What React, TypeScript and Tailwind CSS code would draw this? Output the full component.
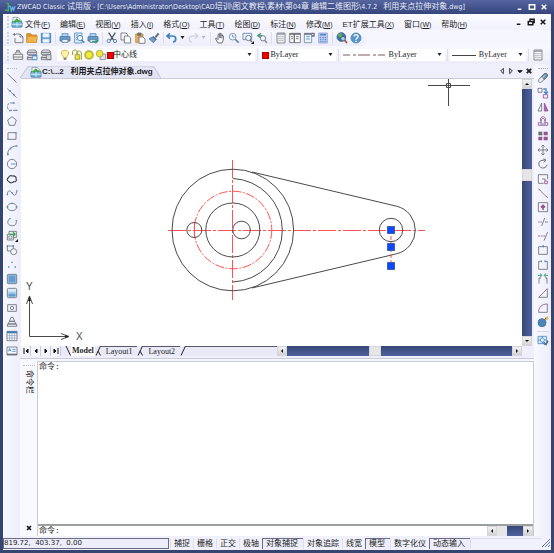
import type { ReactNode } from 'react'
import clsx from 'clsx'

type Tool = { name: string; art: ReactNode }

// all icons are drawn on a 36 unit grid, 3 units to a pixel
function Glyph({ children }: { children: ReactNode }) {
  return (
    <svg
      viewBox="0 0 36 36"
      className="size-3 shrink-0"
      fill="none"
      stroke="#6a6e75"
      strokeWidth="2.5"
      aria-hidden="true"
    >
      {children}
    </svg>
  )
}

const blue = '#4b8ac8'
const purple = '#9a4f9b'

const logo = (
  <>
    <path d="M6 4h15l9 9v20H6z" fill="#f4f8fb" stroke="#8795a5" />
    <path d="M3 17h30v16H3z" fill="#79b9dc" stroke="#4483ab" />
    <path d="M18 17v16M3 25h30" stroke="#d9f0fb" />
    <path d="M9 17l8-9 4 4 7 3-7 2-4-3-3 5z" fill="#3ba939" stroke="#3ba939" />
  </>
)

const page = (
  <>
    <path d="M6 3h24v30H6z" fill="#f1f2f3" stroke="#747a80" />
    <path d="M6 6h24" stroke="#9aa0a6" strokeWidth="5" />
    <path d="M10 14h16M10 20h16M10 26h16" stroke="#9a9fa4" strokeDasharray="4 2" />
  </>
)

const printer = (
  <>
    <path d="M9 5h18v9H9z" fill="#b9d8ee" stroke={blue} />
    <path d="M3 14h30v13H3z" fill="#6ea0cc" stroke="#48759f" />
    <path d="M9 22h18v9H9z" fill="#eef6fc" stroke="#48759f" />
  </>
)

const fileTools: Tool[] = [
  {
    name: 'New',
    art: <path d="M12 6h12l9 9v17H9V18M24 6v9h9M7 3v9M2 7h10" fill="none" />,
  },
  {
    name: 'Open',
    art: (
      <>
        <path d="M2 5h12l4 4h14v22H2z" fill="#d99228" stroke="#c98825" />
        <path d="M5 13h29l-3 18H2z" fill="#f1b54d" stroke="#d99a34" />
      </>
    ),
  },
  {
    name: 'Save',
    art: (
      <>
        <path d="M4 4h28v28H4z" fill="#5f9ed2" stroke="#3f80b9" />
        <path d="M9 5h18v10H9zM9 22h18v9H9z" fill="#f3f8fc" stroke="#d5e6f4" />
      </>
    ),
  },
]

const printTools: Tool[] = [
  { name: 'Print', art: printer },
  {
    name: 'Print preview',
    art: (
      <>
        <path d="M5 3h22v30H5z" fill="#e0effa" stroke={blue} />
        <path d="M9 9h7M9 16h4M9 23h4" stroke={blue} />
        <circle cx="21" cy="18" r="8" fill="#eef8ff" stroke="#477fae" />
        <path d="M26 24l8 8" stroke="#477fae" strokeWidth="4" />
      </>
    ),
  },
  {
    name: 'Publish',
    art: (
      <>
        {printer}
        <path d="M15 28h16m-6-6l7 6-7 6" stroke="#3b9c78" strokeWidth="4" />
      </>
    ),
  },
]

const editTools: Tool[] = [
  {
    name: 'Cut',
    art: (
      <>
        <path d="M8 2l15 23M28 2L13 25" stroke="#454b53" strokeWidth="3.5" />
        <circle cx="8" cy="27" r="5" stroke="#4479ad" />
        <circle cx="27" cy="27" r="5" stroke="#4479ad" />
      </>
    ),
  },
  {
    name: 'Copy',
    art: (
      <>
        <path d="M3 3h15l5 5v16H3z" fill="#fafafa" />
        <path d="M13 12h13l6 6v15H13z" fill="#fafafa" />
      </>
    ),
  },
  {
    name: 'Paste',
    art: (
      <>
        <path d="M5 6h22v26H5z" fill="#e5ae5a" stroke="#ca9140" />
        <path d="M11 3h10v7H11z" fill="#777" />
        <path d="M15 15h12l6 6v13H15z" fill="#fff" />
      </>
    ),
  },
  {
    name: 'Match properties',
    art: (
      <>
        <path d="M3 20l13-6 8 8-8 10z" fill="#6e9cc7" stroke="#4f779f" />
        <path d="M22 16L32 4" stroke="#666c75" strokeWidth="6" />
        <path d="M15 14l10 10" stroke="#4a6f97" strokeWidth="4" />
      </>
    ),
  },
]

const zoomTools: Tool[] = [
  {
    name: 'Pan',
    art: (
      <path
        d="M12 33L5 21c-1-3 2-4 4-1l3 3V9c0-3 4-3 4 0V5c0-3 4-3 4 0v3c0-3 4-3 4 0v4c0-3 4-3 4 0v12l-4 9zM16 9v9M20 8v10M24 11v8"
        fill="#f7f7f7"
        stroke="#555a61"
      />
    ),
  },
  {
    name: 'Zoom realtime',
    art: (
      <>
        <circle cx="14" cy="14" r="10" fill="#edf6fc" stroke="#798591" />
        <path d="M14 8v7h6" stroke={blue} />
        <path d="M22 22l10 10" stroke="#6688a5" strokeWidth="5" />
      </>
    ),
  },
  {
    name: 'Zoom window',
    art: (
      <>
        <path d="M3 4h26v19H3z" stroke="#5686b3" />
        <circle cx="19" cy="18" r="8" fill="#edf6fc" />
        <path d="M24 24l6 6" strokeWidth="4" />
        <path d="M36 27v9h-9z" fill="#111" stroke="none" />
      </>
    ),
  },
  {
    name: 'Zoom previous',
    art: (
      <>
        <path d="M15 4L5 11l10 7M5 11h13" stroke="#43a17b" strokeWidth="4" />
        <circle cx="21" cy="19" r="8" fill="#edf6fc" />
        <path d="M26 25l7 8" stroke="#6688a5" strokeWidth="4" />
      </>
    ),
  },
]

const paletteTools: Tool[] = [
  { name: 'Properties', art: page },
  {
    name: 'Design center',
    art: (
      <>
        <path d="M2 4h32v28H2z" fill="#fafafa" />
        <path d="M2 6h32M16 4v28" strokeWidth="4" />
        <path d="M6 14h6M6 20h6M21 14h8M21 20h8" />
      </>
    ),
  },
  {
    name: 'Tool palettes',
    art: (
      <>
        <path d="M4 4h22v28H4z" fill="#eaf3fb" stroke="#6d8ba8" />
        <path d="M26 4h7v8h-7M4 6h22" strokeWidth="4" />
        <path d="M10 14h10M10 21h10" stroke={blue} />
      </>
    ),
  },
  {
    name: 'Calculator',
    art: (
      <>
        <path d="M5 3h26v30H5z" fill="#b8cdf3" stroke="#8ba6dc" />
        <path d="M9 8h18" stroke="#5f83c6" strokeWidth="5" />
        <path d="M9 17h18M9 23h18M9 29h18" stroke="#5f83c6" strokeWidth="3" strokeDasharray="4 3" />
      </>
    ),
  },
]

const helpTools: Tool[] = [
  {
    name: 'Web search',
    art: (
      <>
        <circle cx="16" cy="15" r="13" fill="#3976b7" stroke="#315f94" />
        <path d="M5 9l9-6 5 7-7 8z" fill="#6ead45" stroke="none" />
        <circle cx="21" cy="20" r="7" fill="#9fd0ef" stroke="#3b4b5b" />
        <path d="M26 25l7 8" stroke="#a74737" strokeWidth="5" />
      </>
    ),
  },
  {
    name: 'Help',
    art: (
      <>
        <circle cx="18" cy="18" r="15" fill="#5796cc" stroke="#4a83b5" />
        <path d="M12 13c1-8 13-6 12 1-1 5-6 4-6 9M18 26v4" stroke="#fff" strokeWidth="4" />
      </>
    ),
  },
]

// stacked sheets shared by the two layer state icons
const sheets = (
  <>
    <path d="M8 3h20l4 7H4z" fill="#f4f4f4" />
    <path d="M4 10h28v6H4z" fill="#e2e3e6" />
    <path d="M7 20h22l3 6H4zM4 26h28v6H4z" fill="#f4f4f4" />
  </>
)

const layerTools: Tool[] = [
  {
    name: 'Layer manager',
    art: (
      <>
        <path d="M8 16l4-7h12l4 7M14 9V4h8v5" fill="#f2f2f2" />
        <path d="M4 16h28v15H4z" fill="#f2f2f2" />
        <path d="M4 24h28" />
      </>
    ),
  },
  {
    name: 'Layer previous',
    art: (
      <>
        {sheets}
        <path d="M19 19h14v13H19z" fill="#dbeefa" stroke={blue} />
        <path d="M19 20h14" stroke={blue} strokeWidth="4" />
      </>
    ),
  },
  {
    name: 'Layer states',
    art: (
      <>
        {sheets}
        <path d="M19 17h14v15H19z" fill="#d4d6da" />
      </>
    ),
  },
]

const drawTools: Tool[] = [
  { name: 'Line', art: <path d="M4 5l28 27" /> },
  {
    name: 'Construction line',
    art: (
      <>
        <path d="M4 5l28 27" />
        <path d="M10 12h5M21 23h5" stroke={blue} strokeWidth="5" />
      </>
    ),
  },
  {
    name: 'Polyline',
    art: (
      <>
        <path d="M22 6h-9C2 6 2 25 11 28h20" strokeDasharray="9 3" />
        <path d="M21 6h5M9 29h5M29 28h5" stroke={blue} strokeWidth="4" />
      </>
    ),
  },
  { name: 'Polygon', art: <path d="M18 5l13 10-5 16H10L5 15z" /> },
  {
    name: 'Rectangle',
    art: (
      <>
        <path d="M6 8h24v20H6z" />
        <path d="M4 28h4M28 8h4" stroke={blue} strokeWidth="4" />
      </>
    ),
  },
  {
    name: 'Arc',
    art: (
      <>
        <path d="M5 32C5 17 15 7 31 6" />
        <path d="M3 31h5M11 14h5M29 6h5" stroke={blue} strokeWidth="5" />
      </>
    ),
  },
  {
    name: 'Circle',
    art: (
      <>
        <circle cx="18" cy="18" r="14" />
        <path d="M15 18h14" stroke={blue} />
      </>
    ),
  },
  {
    name: 'Revision cloud',
    art: (
      <path
        d="M9 26c-7-3-7-10-1-12 1-7 8-7 11-5 7-2 13 3 11 8 4 6-2 10-7 9-3 4-11 5-14 0z"
        stroke="#3d4249"
        strokeWidth="3.5"
      />
    ),
  },
  {
    name: 'Spline',
    art: (
      <>
        <path d="M4 22C5 9 13 9 18 18s12 9 14-4" />
        <path d="M2 23h4M16 17h4M30 12h4" stroke={blue} strokeWidth="4" />
      </>
    ),
  },
  {
    name: 'Ellipse',
    art: (
      <>
        <ellipse cx="18" cy="18" rx="14" ry="11" />
        <path d="M2 18h5M16 7h5M29 18h5" stroke={blue} strokeWidth="4" />
      </>
    ),
  },
  {
    name: 'Ellipse arc',
    art: (
      <>
        <path d="M11 8C0 17 6 30 20 29c8 0 12-7 11-13" />
        <path d="M10 8h4M29 14h4" stroke={blue} strokeWidth="4" />
      </>
    ),
  },
  {
    name: 'Insert block',
    art: (
      <>
        <path d="M9 4h22v19H9z" fill="#eef8ef" />
        <path d="M4 13h18v17H4z" fill="#fafafa" />
        <circle cx="13" cy="22" r="5" />
        <path d="M12 13h14m-5-6l6 6-6 6" stroke="#3b9c5c" strokeWidth="4" />
        <path d="M36 27v9h-9z" fill="#111" stroke="none" />
      </>
    ),
  },
  {
    name: 'Make block',
    art: (
      <>
        <path d="M4 6h18v15H4z" />
        <circle cx="23" cy="23" r="9" fill="#f6f6fc" />
        <path d="M2 6h4M20 6h4" stroke={blue} strokeWidth="4" />
      </>
    ),
  },
  {
    name: 'Point',
    art: <path d="M16 10h4M6 24h4M26 24h4" stroke={blue} strokeWidth="4" />,
  },
  {
    name: 'Hatch',
    art: (
      <>
        <rect x="4" y="4" width="28" height="28" rx="3" fill="#659bd0" stroke="#7c8289" strokeWidth="3" />
        <path d="M7 7h22v22H7z" stroke="#a8cbe8" strokeWidth="2" />
      </>
    ),
  },
  {
    name: 'Gradient',
    art: (
      <>
        <rect x="4" y="4" width="28" height="28" rx="3" fill="#d9ebf7" stroke="#7c8289" strokeWidth="3" />
        <path d="M7 14h22v6H7z" fill="#a3cbe8" stroke="none" />
        <path d="M7 20h22v9H7z" fill="#5d9fd2" stroke="none" />
      </>
    ),
  },
  {
    name: 'Region',
    art: (
      <>
        <path d="M5 8h26v20H5z" />
        <circle cx="18" cy="18" r="5" />
      </>
    ),
  },
  {
    name: 'Wipeout',
    art: <path d="M15 4h6l5 12H10zM10 16h16l3 8H7zM4 24h28v7H4z" />,
  },
  {
    name: 'Table',
    art: (
      <>
        <path d="M3 4h30v28H3z" fill="#fff" />
        <path d="M3 7h30" stroke="#3b79b9" strokeWidth="6" />
        <path d="M3 17h30M3 24h30M11 10v22M18 10v22M26 10v22" stroke="#819bb8" strokeWidth="2" />
      </>
    ),
  },
  {
    name: 'Text',
    art: (
      <>
        <path d="M3 6h30v24H3z" fill="#f6faff" />
        <path d="M7 19l4-9 4 9M9 16h5M19 13h10M19 19h10" stroke={blue} />
        <path d="M3 28h30" strokeWidth="4" />
      </>
    ),
  },
]

const modifyTools: Tool[] = [
  {
    name: 'Erase',
    art: (
      <>
        <path d="M5 23L22 5c6-3 12 4 8 9L14 30c-6 4-12-1-9-7z" fill="#dfe9f3" />
        <path d="M13 14l9 9L30 14c4-6-2-12-8-9z" fill="#638fb9" />
        <path d="M10 25L24 10" stroke="#fff" />
      </>
    ),
  },
  {
    name: 'Copy object',
    art: (
      <>
        <path d="M3 4h12v12H3z" />
        <path d="M19 23h13v10H19z" stroke={purple} />
        <path d="M19 6h8v14m-6-6l6 7 6-7" stroke={blue} strokeWidth="4" />
      </>
    ),
  },
  {
    name: 'Mirror',
    art: (
      <>
        <path d="M14 6v24H3z" />
        <path d="M22 6v24h11z" fill="#a66ba8" stroke={purple} />
      </>
    ),
  },
  {
    name: 'Offset',
    art: (
      <>
        <path d="M4 31h28v-8H22c7-6 4-18-4-18S7 17 14 23H4z" stroke={purple} />
        <path d="M9 27h18M14 19c-4-12 12-12 8 0" />
      </>
    ),
  },
  {
    name: 'Array',
    art: (
      <>
        <path d="M4 5h12v11H4z" fill="#6c6f73" stroke="none" />
        <path d="M20 5h12v11H20zM4 20h12v11H4zM20 20h12v11H20z" fill="#94558f" stroke="none" />
      </>
    ),
  },
  {
    name: 'Move',
    art: (
      <path d="M18 3v30M3 18h30M13 8l5-5 5 5M13 28l5 5 5-5M8 13l-5 5 5 5M28 13l5 5-5 5" />
    ),
  },
  {
    name: 'Rotate',
    art: <path d="M18 6h8M20 2l7 5-7 6M19 7C7 6 2 16 8 25c7 9 20 5 22-5" strokeWidth="3" />,
  },
  {
    name: 'Scale',
    art: (
      <>
        <path d="M20 31H4V5h28v14" />
        <path d="M15 18h9v6" />
        <path d="M23 24h8v8h-8z" stroke={purple} />
      </>
    ),
  },
  {
    name: 'Stretch',
    art: (
      <>
        <path d="M4 5l7 7M25 26l7 6" strokeWidth="3" />
        <path d="M11 12l14 14" stroke={purple} />
      </>
    ),
  },
  {
    name: 'Lengthen',
    art: (
      <>
        <path d="M4 5h28v27H4z" />
        <path d="M18 27V13m-6 6l6-6 6 6" stroke={purple} strokeWidth="5" />
      </>
    ),
  },
  {
    name: 'Trim',
    art: (
      <>
        <path d="M14 30L23 6M24 18h9" />
        <path d="M3 18h12" stroke={purple} strokeDasharray="5 2" />
      </>
    ),
  },
  {
    name: 'Extend',
    art: (
      <>
        <path d="M21 32L32 6" />
        <path d="M3 18h23" stroke={purple} strokeDasharray="6 2" />
      </>
    ),
  },
  {
    name: 'Break at point',
    art: (
      <>
        <path d="M5 8h26v23H5z" />
        <path d="M16 7h5" stroke={blue} strokeWidth="6" />
      </>
    ),
  },
  {
    name: 'Break',
    art: (
      <>
        <path d="M11 7H5v24h26V7h-6" />
        <path d="M11 7h4M22 7h4" stroke={blue} strokeWidth="5" />
      </>
    ),
  },
  {
    name: 'Join',
    art: (
      <>
        <path d="M6 32V15h6M30 32V15h-6" />
        <path d="M3 7h11m-5-5l6 5-6 6M33 7H22m5-5l-6 5 6 6" stroke="#45a170" strokeWidth="3" />
      </>
    ),
  },
  {
    name: 'Chamfer',
    art: (
      <>
        <path d="M31 5v26H5" />
        <path d="M5 31L31 5" stroke={purple} />
      </>
    ),
  },
  {
    name: 'Fillet',
    art: (
      <>
        <path d="M31 6v25H5" />
        <path d="M5 31C5 15 14 6 31 6" stroke={purple} />
      </>
    ),
  },
  {
    name: 'Explode',
    art: (
      <>
        <circle cx="15" cy="20" r="12" fill="#4b86b8" stroke="#416f97" />
        <path d="M23 11l5-6" strokeWidth="4" />
        <path d="M27 3l7 7M33 2l-6 10" stroke="#e4b445" strokeWidth="4" />
      </>
    ),
  },
]

const editBlock: Tool = {
  name: 'Edit block',
  art: (
    <>
      <path d="M3 4h26v22H3z" fill="#d8edf9" stroke={blue} />
      <path d="M3 15h26M16 4v22" stroke={blue} />
      <circle cx="16" cy="15" r="6" fill="#eef8ff" stroke={blue} />
      <path d="M20 22l6 8" stroke="#3f7fbe" strokeWidth="6" />
      <path d="M26 30l7-13" stroke="#66717c" strokeWidth="5" />
    </>
  ),
}

const menus = [
  ['文件', 'F'],
  ['编辑', 'E'],
  ['视图', 'V'],
  ['插入', 'I'],
  ['格式', 'O'],
  ['工具', 'T'],
  ['绘图', 'D'],
  ['标注', 'N'],
  ['修改', 'M'],
  ['ET扩展工具', 'X'],
  ['窗口', 'W'],
  ['帮助', 'H'],
]

const modes = [
  { label: '捕捉', on: false },
  { label: '栅格', on: false },
  { label: '正交', on: false },
  { label: '极轴', on: false },
  { label: '对象捕捉', on: true },
  { label: '对象追踪', on: false },
  { label: '线宽', on: false },
  { label: '模型', on: true },
  { label: '数字化仪', on: false },
  { label: '动态输入', on: true },
]

const title =
  'ZWCAD Classic 试用版 - [C:\\Users\\Administrator\\Desktop\\CAD培训\\图文教程\\素材\\第04章 编辑二维图形\\4.7.2   利用夹点拉伸对象.dwg]'

function ToolButton({ tool, className }: { tool: Tool; className?: string }) {
  return (
    <button
      type="button"
      aria-label={tool.name}
      className={clsx('flex size-3.5 shrink-0 items-center justify-center', className)}
    >
      <Glyph>{tool.art}</Glyph>
    </button>
  )
}

function ToolGroup({ tools }: { tools: Tool[] }) {
  return (
    <div className="flex">
      {tools.map((tool) => (
        <ToolButton key={tool.name} tool={tool} />
      ))}
    </div>
  )
}

function Separator() {
  return <span className="mx-0.5 h-3 w-px shrink-0 bg-[#dddeea]" />
}

function Grip() {
  return <span className="mr-0.5 ml-1 h-3 shrink-0 border-l-2 border-dotted border-[#d0d1dc]" />
}

function Caret({ dim }: { dim?: boolean }) {
  return (
    <svg viewBox="0 0 7 4" className="h-1 w-[7px] shrink-0" aria-hidden="true">
      <path d="M1.500 0h4L3.500 3z" fill={dim ? '#b9bac4' : '#222'} />
    </svg>
  )
}

function Combo({
  label,
  value,
  className,
  selectClass,
  children,
}: {
  label: string
  value: string
  className: string
  selectClass: string
  children: ReactNode
}) {
  return (
    <label className={clsx('relative flex h-3 items-center bg-white', className)}>
      <span className="pointer-events-none absolute left-0.5 flex items-center">
        {children}
      </span>
      <select
        aria-label={label}
        className={clsx(
          'h-3 w-full appearance-none bg-transparent text-[8px] leading-3 outline-none',
          selectClass
        )}
      >
        <option>{value}</option>
      </select>
      <span className="pointer-events-none absolute right-0.5">
        <Caret />
      </span>
    </label>
  )
}

type Direction = 'up' | 'down' | 'left' | 'right'

const arrows: Record<Direction, string> = {
  up: 'M3 6l2-2 2 2z',
  down: 'M3 4l2 2 2-2z',
  left: 'M6 3v4L4 5z',
  right: 'M4 3v4l2-2z',
}

function ScrollButton({ direction }: { direction: Direction }) {
  return (
    <button
      type="button"
      aria-label={`Scroll ${direction}`}
      className="size-2.5 shrink-0 border border-[#d6d6da] bg-linear-to-b from-[#f1f1f1] to-[#d3d3d5]"
    >
      <svg viewBox="1 1 8 8" className="size-2" aria-hidden="true">
        <path d={arrows[direction]} fill="#111" />
      </svg>
    </button>
  )
}

function WindowButtons({ light }: { light?: boolean }) {
  const buttons = [
    { name: 'Minimize', d: 'M3 8h4' },
    { name: 'Restore', d: light ? 'M2.500 3h6v5h-6z' : 'M4.500 4V2.500h4.500V6H7M2.500 5h5v3.500h-5z' },
    { name: 'Close', d: 'M3 3l5 5M8 3L3 8' },
  ]
  return (
    <div className={clsx('flex shrink-0', light ? 'text-white' : 'text-[#15161a]')}>
      {buttons.map((item) => (
        <button
          key={item.name}
          type="button"
          aria-label={item.name}
          className="flex h-3 w-3 items-center justify-center"
        >
          <svg
            viewBox="0 0 11 11"
            className="size-2.5"
            fill="none"
            stroke="currentColor"
            strokeWidth="1.600"
            aria-hidden="true"
          >
            <path d={item.d} />
          </svg>
        </button>
      ))}
    </div>
  )
}

function TitleBar() {
  return (
    <header className="flex h-3.5 shrink-0 items-center gap-px bg-linear-to-b from-[#5465a0] to-[#35457c] pr-1 pl-1 text-[#e9ecf7]">
      <svg viewBox="0 0 36 36" className="size-3 shrink-0" fill="none" strokeWidth="4" aria-hidden="true">
        <path d="M3 27l10 2V7h-5" stroke="#42b658" />
        <path d="M14 16h5l3 13 4-10 3 8 4-11" stroke="#5fb2ee" />
      </svg>
      {/* Chinese runs are set one size larger than the Latin ones */}
      <h1 className="min-w-0 flex-1 truncate font-['DejaVu_Sans_Condensed','Noto_Sans_CJK_SC',sans-serif] text-[7px] leading-3 whitespace-pre">
        {title.split(/([\u4e00-\u9fff]+)/).map((part, index) =>
          index % 2 ? (
            <span key={index} className="text-[8px]">
              {part}
            </span>
          ) : (
            part
          )
        )}
      </h1>
      <WindowButtons light />
    </header>
  )
}

function MenuBar() {
  return (
    <nav className="flex h-4 shrink-0 items-center bg-linear-to-b from-[#fbfbff] to-[#f1f1fd] pr-0.5">
      <Grip />
      <Glyph>{logo}</Glyph>
      <ul className="ml-0.5 flex flex-1 gap-2.5">
        {menus.map(([label, key]) => (
          <li key={key}>
            <button type="button" className="text-[8px] leading-3 whitespace-nowrap">
              {label}
              <span className="text-[7px]">
                (<u>{key}</u>)
              </span>
            </button>
          </li>
        ))}
      </ul>
      <WindowButtons />
    </nav>
  )
}

function StandardToolbar() {
  return (
    <div className="flex h-4 items-center self-start rounded-r-md bg-linear-to-b from-[#f8f8ff] to-[#ededfa] pr-1">
      <Grip />
      <ToolGroup tools={fileTools} />
      <Separator />
      <ToolGroup tools={printTools} />
      <Separator />
      <ToolGroup tools={editTools} />
      <Separator />
      <button type="button" aria-label="Undo" className="flex items-center">
        <Glyph>
          <path d="M12 4L3 12l9 8M4 12h16c12 0 12 17 1 18" stroke="#3e7fc1" strokeWidth="5" />
        </Glyph>
        <span className="px-px">
          <Caret />
        </span>
      </button>
      <button type="button" aria-label="Redo" className="flex items-center">
        <Glyph>
          <path d="M24 4l9 8-9 8M32 12H16C4 12 4 29 15 30" stroke="#d2d5e1" strokeWidth="4" />
        </Glyph>
        <span className="px-px">
          <Caret dim />
        </span>
      </button>
      <Separator />
      <ToolGroup tools={zoomTools} />
      <Separator />
      <ToolGroup tools={paletteTools} />
      <Separator />
      <ToolGroup tools={helpTools} />
    </div>
  )
}

function LayerToolbar() {
  return (
    <div className="flex h-[18px] shrink-0 items-center bg-linear-to-b from-[#f8f8ff] to-[#ededfa]">
      <Grip />
      <ToolGroup tools={layerTools} />
      <Combo label="Layer" value="中心线" className="ml-1 flex-[198]" selectClass="pl-14">
        <span className="flex">
          <Glyph>
            <path d="M13 26c0-6-6-7-6-14C7 1 29 1 29 12c0 7-6 8-6 14z" fill="#fff4a5" stroke="#c1a43e" />
            <path d="M14 30h8" strokeWidth="5" />
          </Glyph>
          <Glyph>
            <path d="M5 18V9c0-8 13-8 13 0v7M18 16v-4c0-8 13-8 13 0v20" stroke="#97951d" strokeWidth="3" />
            <path d="M12 17h14v14H12z" fill="#e8df43" stroke="#9c9a22" />
          </Glyph>
          <Glyph>
            <circle cx="18" cy="18" r="15" fill="#b6ca78" stroke="none" />
            <circle cx="18" cy="18" r="11" fill="#f7e838" stroke="#b1a733" />
          </Glyph>
          <Glyph>
            <path d="M15 15h17v17H15z" fill="#dce0e9" stroke="#75859b" />
            <circle cx="14" cy="14" r="10" fill="#f2e63c" stroke="#a4a13b" />
          </Glyph>
        </span>
        <span className="size-[7px] border border-[#a00] bg-[#f00000]" />
      </Combo>
      <Separator />
      <Combo label="Color" value="ByLayer" className="flex-[75]" selectClass="pl-2.5 font-['Liberation_Serif',serif] font-medium">
        <span className="size-[7px] border border-[#a00] bg-[#f00000]" />
      </Combo>
      <Separator />
      <Combo label="Linetype" value="ByLayer" className="flex-[104]" selectClass="pl-12 font-['Liberation_Serif',serif] font-medium">
        <svg viewBox="0 0 42 2" className="h-0.5 w-[42px]" aria-hidden="true">
          <path d="M0 1h42" stroke="#7b5b5b" strokeDasharray="7 3 3 2 12 3 3 2" />
        </svg>
      </Combo>
      <Separator />
      <Combo label="Lineweight" value="ByLayer" className="flex-[76]" selectClass="pl-[29px] font-['Liberation_Serif',serif] font-medium">
        <span className="h-px w-6 bg-[#444]" />
      </Combo>
      <Separator />
      <ToolButton tool={{ name: 'Property panel', art: page }} className="mr-1.5" />
    </div>
  )
}

function DocumentTabs() {
  const controls = [
    { name: 'Previous tab', d: 'M6 1.500v6L3 4.500z', fill: 'none' },
    { name: 'Next tab', d: 'M3 1.500v6l3-3z', fill: 'none' },
    { name: 'Tab list', d: 'M2 4h5L4.500 6.500z', fill: '#111' },
    { name: 'Close tab', d: 'M2 2l5 5M7 2L2 7', fill: 'none' },
  ]
  return (
    <div className="flex h-3.5 shrink-0 items-end bg-[#efeffb]">
      <div className="relative flex h-3 items-center pr-2 pl-2.5">
        <svg viewBox="0 0 140 12" preserveAspectRatio="none" className="absolute inset-0 size-full" aria-hidden="true">
          <path d="M0 12L7 2q1-2 4-2h118q4 0 5 2l6 10" fill="#e3e4f4" stroke="#c5c7d7" />
        </svg>
        <button type="button" className="relative flex items-center text-[8px] leading-3 font-bold whitespace-pre">
          <Glyph>{logo}</Glyph>
          {'C:\\...2   利用夹点拉伸对象.dwg'}
        </button>
      </div>
      <div className="ml-auto flex h-3.5 items-center pr-px">
        {controls.map((item) => (
          <button key={item.name} type="button" aria-label={item.name} className="flex w-[9px] justify-center">
            <svg viewBox="0 0 9 9" className="size-2" fill={item.fill} stroke="#222" aria-hidden="true">
              <path d={item.d} strokeWidth={item.name === 'Close tab' ? 2 : 1} />
            </svg>
          </button>
        ))}
      </div>
    </div>
  )
}

// model space; group is shifted so coordinates read as window pixels
function Drawing() {
  return (
    <svg className="size-full" fill="none" stroke="#4a4a4a" aria-label="Drawing area">
      <g transform="translate(-21 -79)">
        <g stroke="#ff5252">
          <path d="M168 230.500h257" strokeDasharray="18 2 3 2" />
          <path d="M232.500 160v140" strokeDasharray="18 2 3 2" />
          <path d="M194.500 222v16" />
          <circle cx="233" cy="230" r="38.800" strokeDasharray="9 1.500 2 1.500" />
        </g>
        <circle cx="232.800" cy="230" r="60.800" />
        <path d="M232.800 178.500a51.800 51.800 0 0 1 0 103.500" />
        <circle cx="232.800" cy="230" r="27" />
        <circle cx="194.300" cy="230" r="7.500" />
        <circle cx="241.500" cy="230" r="8.800" />
        <circle cx="391" cy="230" r="11.700" />
        <path d="M252 172L396.600 206.200A24.500 24.500 0 0 1 396.600 253.800L252 288" />
        <path d="M391 230v36" stroke="#ff5252" strokeDasharray="4 2" />
        <g fill="#0a49ff" stroke="#3f5f9f">
          <path d="M387.500 226.500h7v7h-7zM387.500 243.500h7v7h-7zM387.500 262.500h7v7h-7z" />
        </g>
        <path d="M428 85.500h42M448.500 79v27" />
        <path d="M446.500 83.500h4v4h-4z" />
        <path d="M29.500 298v38.500H67M29.500 296l-3 8M29.500 296l3 8M69 336.500l-8-3M69 336.500l-8 3" />
        <path d="M28 301l1.500-5 1.500 5zM65 335l4 1.500-4 1.500z" fill="#222" stroke="none" />
        <g fill="#4a4a4a" stroke="none" className="font-['Liberation_Sans',sans-serif] text-[10px]">
          <text x="26" y="290">Y</text>
          <text x="76" y="340">X</text>
        </g>
      </g>
    </svg>
  )
}

function Slash({ cross }: { cross?: boolean }) {
  return (
    <svg viewBox="0 0 6 10" className="h-2.5 w-1.5" stroke="#222" fill="none" aria-hidden="true">
      <path d={cross ? 'M5.500 0L1 9.500M3 5l2.500 4.500' : 'M1 0l4.500 9.500'} />
    </svg>
  )
}

function LayoutTabs() {
  const steps = [
    { name: 'First layout', d: 'M3 2v6M7 3v4L5 5z' },
    { name: 'Previous layout', d: 'M6 3v4L4 5z' },
    { name: 'Next layout', d: 'M4 3v4l2-2z' },
    { name: 'Last layout', d: 'M3 3v4l2-2zM7 2v6' },
  ]
  return (
    <div className="flex h-2.5 flex-[256] items-center overflow-hidden bg-[#e9e9f8]">
      {steps.map((step) => (
        <button
          key={step.name}
          type="button"
          aria-label={step.name}
          className="h-2.5 w-2.5 shrink-0 border-r border-[#c9cad8] bg-[#f4f4fb]"
        >
          <svg viewBox="0 0 10 10" className="size-2.5" fill="#111" stroke="#111" aria-hidden="true">
            <path d={step.d} />
          </svg>
        </button>
      ))}
      <div className="ml-1 flex h-2.5 items-center font-['Liberation_Serif',serif] text-[8px] leading-[10px]">
        <Slash />
        <button type="button" className="h-2.5 bg-white px-px font-bold">
          Model
        </button>
        <Slash cross />
        <button type="button" className="h-2.5 border-t border-[#55586a] px-[5px] leading-2">
          Layout1
        </button>
        <Slash cross />
        <button type="button" className="h-2.5 border-t border-[#55586a] px-[5px] leading-2">
          Layout2
        </button>
        <svg viewBox="0 0 6 10" className="h-2.5 w-1.5 shrink-0" stroke="#222" aria-hidden="true">
          <path d="M5.500 0L1 9.500" />
        </svg>
      </div>
      <span className="h-full flex-1 border-t border-[#55586a]" />
    </div>
  )
}

function CanvasPanel() {
  return (
    <section className="flex flex-[280] flex-col border-b border-[#c9cbd6] bg-[#efeffb] pb-0.5 pl-px">
      <div className="flex min-h-0 flex-1 border-t border-[#c9cbd6]">
        <div className="min-w-0 flex-1 bg-white">
          <Drawing />
        </div>
        <div className="mr-0.5 flex w-2.5 flex-col">
          <ScrollButton direction="up" />
          <div className="flex-[79] bg-linear-to-r from-[#364777] to-[#4f629d]" />
          <div className="h-3 border border-[#d6d6da] bg-[#e6e6e6]" />
          <div className="flex-[152] bg-linear-to-r from-[#364777] to-[#4f629d]" />
          <ScrollButton direction="down" />
        </div>
      </div>
      <div className="flex pr-3">
        <LayoutTabs />
        <div className="flex flex-[245]">
          <ScrollButton direction="left" />
          <div className="flex-[83] bg-linear-to-b from-[#364777] to-[#4f629d]" />
          <div className="w-3 border border-[#d6d6da] bg-[#e6e6e6]" />
          <div className="flex-[132] bg-linear-to-b from-[#364777] to-[#4f629d]" />
          <ScrollButton direction="right" />
        </div>
      </div>
    </section>
  )
}

function CommandPanel() {
  return (
    <section className="mt-0.5 flex flex-[176] bg-[#f1f1fd]">
      <div className="flex w-[17px] shrink-0 flex-col items-center justify-between bg-[#f8f8ff] pt-1 pb-1">
        <div className="flex flex-col items-center gap-1">
          <span className="w-3 border-t border-dotted border-[#b5b6c4]" />
          <h2 className="text-[8px] leading-[10px] [text-orientation:sideways] [writing-mode:vertical-rl]">
            命令栏
          </h2>
        </div>
        <button type="button" aria-label="Close command window">
          <svg viewBox="0 0 8 8" className="size-2" stroke="#111" strokeWidth="1.600" aria-hidden="true">
            <path d="M2 2l4 4M6 2L2 6" />
          </svg>
        </button>
      </div>
      <div className="flex min-w-0 flex-1 flex-col border-t border-r border-l border-[#c3cdd2] bg-white">
        <textarea
          readOnly
          aria-label="Command history"
          defaultValue="命令:"
          className="block min-h-0 w-full flex-1 resize-none pl-px font-['Liberation_Mono','Noto_Sans_CJK_SC',monospace] text-[8px] leading-[10px] outline-none"
        />
        <div className="flex h-3 items-center border-t-2 border-[#9a9f9f]">
          <label className="flex flex-1 items-center pl-px font-['Liberation_Mono','Noto_Sans_CJK_SC',monospace] text-[8px] leading-[10px]">
            命令:
            <input className="h-2.5 min-w-0 flex-1 outline-none" />
          </label>
          <div className="flex w-[46px]">
            <ScrollButton direction="left" />
            <div className="flex-1 bg-[#e6e6e6]" />
            <div className="w-4 bg-linear-to-b from-[#364777] to-[#4f629d]" />
            <ScrollButton direction="right" />
          </div>
        </div>
      </div>
    </section>
  )
}

function StatusBar() {
  return (
    <footer className="flex h-3.5 shrink-0 items-center bg-[#f1f1fc] pr-px text-[8px] leading-[10px]">
      <output className="h-[11px] w-[166px] border border-[#6b6e83] bg-[#ededfc] font-['DejaVu_Sans',sans-serif] text-[7px] leading-[9px] whitespace-pre">
        819.72,  403.37,  0.00
      </output>
      <div className="ml-px flex">
        {modes.map((mode) => (
          <button
            key={mode.label}
            type="button"
            aria-pressed={mode.on}
            className={clsx(
              'h-[11px] border-t border-l pl-[3px] whitespace-nowrap',
              mode.on
                ? 'border-[#6b6e83] bg-[#ededfc] pr-[5px]'
                : 'border-transparent border-l-[#dcdded] pr-[3px]'
            )}
          >
            {mode.label}
          </button>
        ))}
      </div>
      <span className="h-[11px] flex-1 border-t border-l border-[#dcdded]" />
      <svg viewBox="0 0 8 8" className="size-2" stroke="#6074b4" aria-hidden="true">
        <path d="M0 8l8-8M3 8l5-5M6 8l2-2" />
      </svg>
    </footer>
  )
}

function SideToolbar({ tools, children }: { tools: Tool[]; children?: ReactNode }) {
  return (
    <aside className="flex w-[17px] shrink-0 flex-col items-center bg-linear-to-r from-[#f8f8ff] to-[#eeeefb] pt-1">
      <span className="mb-0.5 w-2.5 border-t border-dotted border-[#b5b6c4]" />
      {tools.map((tool) => (
        <ToolButton key={tool.name} tool={tool} className="nth-[3n]:mt-px" />
      ))}
      {children}
    </aside>
  )
}

export default function App() {
  return (
    <div className="flex h-screen flex-col overflow-hidden bg-[#35456f] font-['Liberation_Sans','Noto_Sans_CJK_SC',sans-serif] text-[#1c1d22]">
      <TitleBar />
      <main className="mx-[3px] mb-[3px] flex min-h-0 flex-1 flex-col bg-[#f6f6fe]">
        <MenuBar />
        <StandardToolbar />
        <LayerToolbar />
        <div className="flex min-h-0 flex-1">
          <SideToolbar tools={drawTools} />
          <div className="flex min-w-0 flex-1 flex-col">
            <DocumentTabs />
            <CanvasPanel />
            <CommandPanel />
          </div>
          <SideToolbar tools={modifyTools}>
            <span className="my-0.5 w-3 border-t border-[#d5d6e2]" />
            <ToolButton tool={editBlock} />
          </SideToolbar>
        </div>
        <StatusBar />
      </main>
    </div>
  )
}
